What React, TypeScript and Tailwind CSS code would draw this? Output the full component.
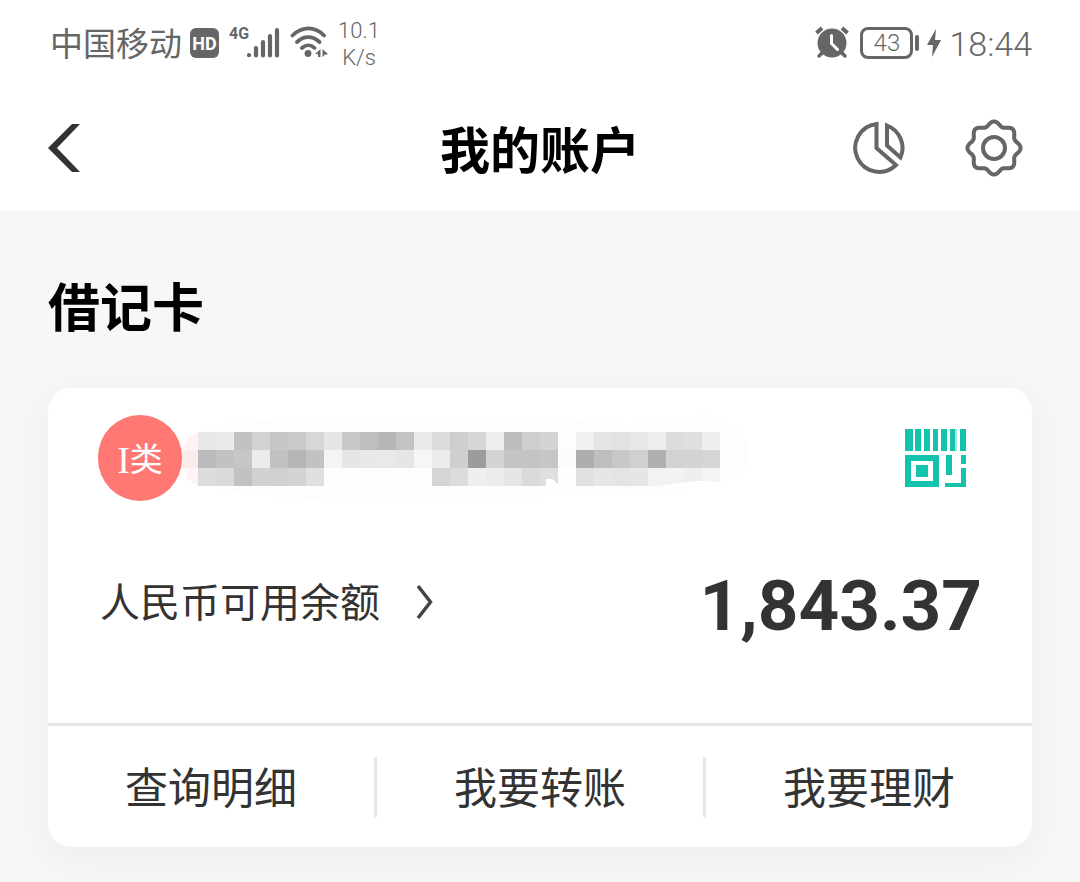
import type { ReactNode } from "react";

// one entry per 18px block, grey level as hex
const MASK_ROWS = [
  "e8 ea c2 d2 c6 cb d7 e6 c8 be b7 c3 ea dd ce d6 ed bd ce d4 fd f0 e5 e2 e7 ee dc df ee",
  "bb c2 c6 ec c1 b6 c2 f4 e6 e8 e9 e6 f6 ec cf 9c d4 c4 c4 c6 fc ae be c8 d0 b0 d2 d3 d5",
  "dc d9 c1 d1 d0 d3 df fd fd fd fd fd fe d5 dc ef ec e5 da df fe e1 e6 e4 e6 f2 f3 ef f4",
];

const ACTIONS = ["查询明细", "我要转账", "我要理财"];

const GEAR_POINTS = Array.from({ length: 96 }, (_, i) => {
  const angle = (i / 96) * Math.PI * 2;
  const radius = 24.4 + 2.2 * Math.cos(angle * 8);
  const x = 30 + radius * Math.cos(angle);
  const y = 30 + radius * Math.sin(angle);
  return `${x.toFixed(2)},${y.toFixed(2)}`;
}).join(" ");

function SignalIcon() {
  return (
    <svg width="34" height="32" viewBox="0 0 34 32" fill="none" stroke="#666" strokeWidth="4.2" strokeLinecap="round">
      <path d="M3 28v.2M10 21v7.500M17 15v13.500M24 9v19.500M31 3v25.500" />
    </svg>
  );
}

function WifiIcon() {
  return (
    <svg width="38" height="34" viewBox="0 0 38 34" fill="none" stroke="#666" strokeWidth="3.800" strokeLinecap="round">
      <path d="M2.500 9.500C12 0 25 0 34 9.500M7 16c7-6.500 15.500-6.500 22.500 0M12 22c4-3.500 9-3.500 12.500 0" />
      <circle cx="18" cy="27.500" r="3.400" fill="#666" stroke="none" />
      <path d="M30.500 23v8h-2.500v-3H25zM32.500 31v-8l5 4.500v1h-2.500z" fill="#666" stroke="none" />
    </svg>
  );
}

function AlarmIcon() {
  return (
    <svg width="34" height="34" viewBox="0 0 34 34" fill="none" stroke="#666" strokeLinecap="round">
      <circle cx="17" cy="17" r="14.500" fill="#666" stroke="none" />
      <path d="M1.500 7l5.500-5M32.500 7L27 2" strokeWidth="4" strokeLinecap="butt" />
      <path d="M7 27l-3 3M27 27l3 3" strokeWidth="3.500" />
      <path d="M16.500 9.500v8l6 6" stroke="#fff" strokeWidth="3" />
    </svg>
  );
}

function BoltIcon() {
  return (
    <svg width="14" height="30" viewBox="0 0 14 30">
      <path d="M9 1L0 17h6L5 29l9-17H8z" fill="#666" />
    </svg>
  );
}

function StatusBar() {
  return (
    <div className="flex h-[86px] items-center justify-between bg-white px-12 font-['Roboto','Noto_Sans_CJK_SC',sans-serif] text-[#666]">
      <div className="flex items-center pl-[2px]">
        <span className="pt-1 text-[33px] leading-[40px]">中国移动</span>
        <span className="ml-2 flex h-[30px] w-[29px] items-center justify-center rounded-md bg-[#666] text-[18px] font-bold text-white">
          HD
        </span>
        <span className="ml-[10px] pb-[18px] text-[16px] leading-[20px] font-bold">4G</span>
        <span className="-ml-[3px]">
          <SignalIcon />
        </span>
        <span className="ml-[10px]">
          <WifiIcon />
        </span>
        <span className="ml-[10px] pt-[2px] text-center text-[22px] leading-[27px] font-light">
          10.1
          <br />
          K/s
        </span>
      </div>
      <div className="flex items-center">
        <AlarmIcon />
        <span className="ml-[11px] flex h-8 w-[53px] items-center justify-center rounded-lg border-[3px] border-[#666] text-[24px] leading-[26px] font-light">
          43
        </span>
        <span className="ml-[2px] h-4 w-1 rounded-full bg-[#666]" />
        <span className="mx-2">
          <BoltIcon />
        </span>
        <span className="pt-[2px] text-[34px] leading-[40px] font-light">18:44</span>
      </div>
    </div>
  );
}

function IconButton({ label, children }: { label: string; children: ReactNode }) {
  return (
    <button type="button" aria-label={label} className="flex cursor-pointer">
      {children}
    </button>
  );
}

function Header() {
  return (
    <header className="grid h-[125px] grid-cols-[1fr_auto_1fr] items-center bg-white px-12 pb-[2px]">
      <IconButton label="返回">
        <svg width="34" height="50" viewBox="0 0 34 50" fill="#333">
          <path d="M24 1h8L9 25l23 24h-8L0 25z" />
        </svg>
      </IconButton>
      <h1 className="pb-[2px] text-[50px] leading-[72px] font-bold text-black">我的账户</h1>
      <div className="flex items-center justify-end gap-[58px] pr-2">
        <IconButton label="收支分析">
          <svg width="54" height="54" viewBox="0 0 54 54" fill="none" stroke="#666" strokeWidth="4">
            <path d="M24.500 3V27L44 44A24 24 0 1 1 24.500 3z" />
            <path d="M35 4.500V24.500L48.500 36.500A24 24 0 0 0 35 4.500z" />
          </svg>
        </IconButton>
        <IconButton label="设置">
          <svg width="60" height="60" viewBox="0 0 60 60" fill="none" stroke="#666" strokeWidth="4">
            <polygon points={GEAR_POINTS} strokeLinejoin="round" />
            <circle cx="30" cy="30" r="11" />
          </svg>
        </IconButton>
      </div>
    </header>
  );
}

function MaskedNumber() {
  return (
    <svg width="568" height="86" viewBox="0 0 568 86" role="img" aria-label="卡号" shapeRendering="crispEdges">
      <path d="M0 34C10 6 60 5 140 3h240c60 8 90 8 140-4 30 2 48 22 48 44s-40 32-88 32H370c-30 20-60 14-110 14S80 86 30 72L0 50z" fill="#fdfdfd" />
      <path d="M0 34L6 22l10-5v18z" fill="#fef3f2" />
      <path d="M0 35h16v18H0z" fill="#fbebea" />
      <path d="M1 53h15v18L6 65z" fill="#fef5f4" />
      {MASK_ROWS.map((row, y) =>
        row.split(" ").map((level, x) => (
          <rect key={`${x}-${y}`} x={16 + x * 18} y={17 + y * 18} width="18" height="18" fill={`#${level}${level}${level}`} />
        ))
      )}
      <path d="M364 64h6l6 5v2h-12zM478 71l20-3 20-2 20 1v4z" fill="#fff" />
    </svg>
  );
}

function PayCodeIcon() {
  return (
    <svg width="62" height="58" viewBox="0 0 62 58" fill="#13c3ac">
      <path d="M1 0h8v22H1zM11 0h6v22h-6zM20 0h6v22h-6zM29 0h5v22h-5zM37 0h6v22h-6zM46 0h5v22h-5zM56 0h6v22h-6z" />
      <path d="M51 0h2v22h-2z" opacity=".4" />
      <path fillRule="evenodd" d="M1 26h34v32H1zM7 32v20h22V32z" />
      <path d="M12 36h12v12H12zM42 26h6v20h-6zM57 26h5v9h-5zM57 39h5v19H41v-4h16z" />
    </svg>
  );
}

function AccountCard() {
  return (
    <section className="rounded-3xl bg-white shadow-[0_10px_40px_rgba(0,0,0,0.05)]">
      <div className="flex items-center pt-[27px] pr-[66px] pl-[50px]">
        <span className="flex h-[86px] w-[84px] shrink-0 items-center justify-center rounded-full bg-[#ff7874] pt-1 font-['Liberation_Serif','Noto_Sans_CJK_SC',serif] text-[38px] leading-[40px] text-white">
          I<span className="text-[33px]">类</span>
        </span>
        <MaskedNumber />
        <button type="button" aria-label="付款码" className="ml-auto cursor-pointer">
          <PayCodeIcon />
        </button>
      </div>
      <div className="mt-[65px] flex items-center justify-between pr-[50px] pb-[81px] pl-[52px]">
        <a href="#balance" className="flex items-center gap-9 pb-1 text-[40px] leading-[68px] text-[#333]">
          <span className="pb-1">人民币可用余额</span>
          <svg width="18" height="36" viewBox="0 0 18 36" fill="none" stroke="#444" strokeWidth="3.500">
            <path d="M2 2l12.500 16L2 34" />
          </svg>
        </a>
        <strong className="pt-1 font-['Roboto',sans-serif] text-[71px] leading-[72px] font-bold text-[#333]">
          1,843.37
        </strong>
      </div>
      <div className="flex h-[124px] items-center divide-x-[3px] divide-[#e6e6e6] border-t-[3px] border-[#e6e6e6]">
        {ACTIONS.map((action) => (
          <button key={action} type="button" className="h-[60px] flex-1 cursor-pointer pb-1 text-[43px] leading-[56px] text-[#333]">
            {action}
          </button>
        ))}
      </div>
    </section>
  );
}

export default function App() {
  return (
    <div className="min-h-screen bg-[#f7f7f7] font-['Noto_Sans_CJK_SC',sans-serif]">
      <StatusBar />
      <Header />
      <main className="px-12 pt-[58px] pb-8">
        <h2 className="mb-[47px] text-[52px] leading-[72px] font-bold text-black">借记卡</h2>
        <AccountCard />
      </main>
    </div>
  );
}
